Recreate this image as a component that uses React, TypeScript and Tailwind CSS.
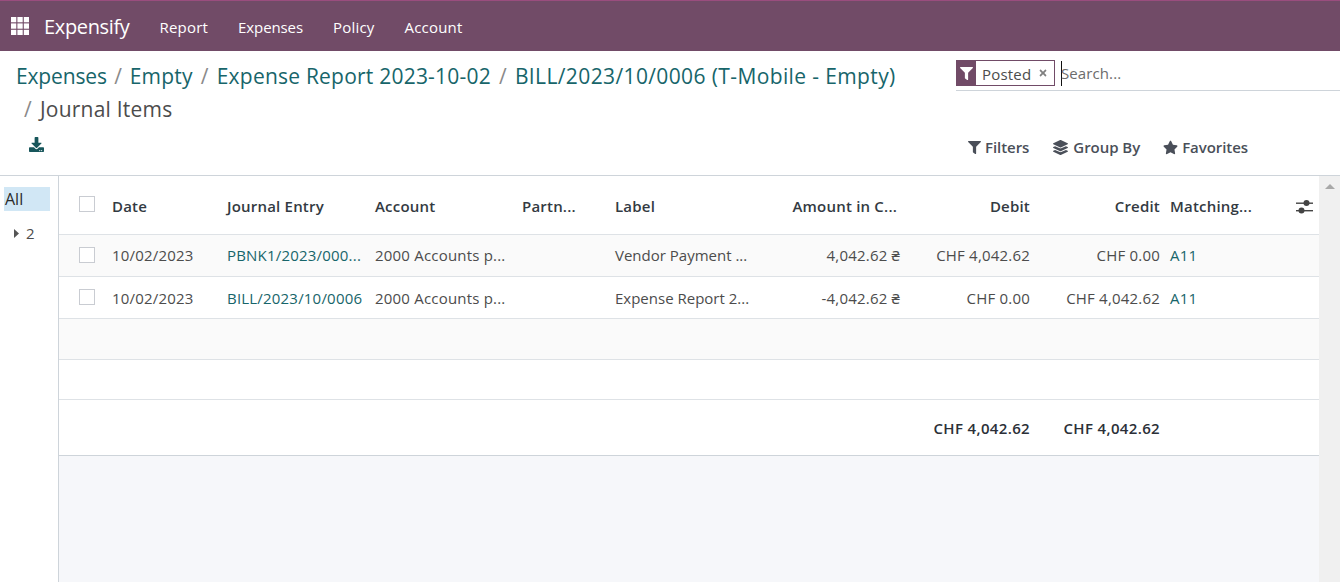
import React from "react";
import { FaFilter, FaLayerGroup, FaStar, FaDownload, FaTimes } from "react-icons/fa";

const grid = "grid grid-cols-[53px_115px_148px_147px_93px_135px_150px_130px_130px_149px] items-center";

function Check() {
  return <span className="block w-4 h-4 ml-5 border border-[#c9ccd2] bg-white" />;
}

function Row({ journal, amount, debit, credit, label, alt }: { journal: string; amount: string; debit: string; credit: string; label: string; alt?: boolean }) {
  return (
    <div className={`${grid} h-[42px] border-b border-[#dee2e6] text-[15px] tracking-[0.2px] text-[#4c4c4c] whitespace-nowrap ${alt ? "bg-[#fafafa]" : "bg-white pt-px"}`}>
      <span className={alt ? "-mt-px" : "-mt-[2px]"}><Check /></span>
      <span>10/02/2023</span>
      <span className="text-[#17656a]">{journal}</span>
      <span>2000 Accounts p...</span>
      <span />
      <span className="tracking-normal">{label}</span>
      <span className="text-right">{amount}</span>
      <span className="text-right">{debit}</span>
      <span className="text-right">{credit}</span>
      <span className="pl-[10px] text-[#17656a]">A11</span>
    </div>
  );
}

export default function App() {
  return (
    <div className="w-[1340px] h-[582px] overflow-hidden flex flex-col bg-white font-['Open_Sans','Noto_Sans',sans-serif] text-[#4c4c4c]">
      <nav className="h-[51px] shrink-0 flex items-center bg-[#714b67] border-t border-[#9a4d7e] text-white">
        <svg className="ml-[11px] w-[18px] h-[18px]" viewBox="0 0 18 18" fill="#fff">
          {[0, 6.4, 12.8].flatMap((y) => [0, 6.4, 12.8].map((x) => <rect key={`${x}-${y}`} x={x} y={y} width="5.3" height="5.3" />))}
        </svg>
        <span className="ml-[15px] pt-px text-[20px] tracking-[-0.35px]">Expensify</span>
        <div className="ml-[30px] pt-[2px] flex gap-[30px] text-[15px] tracking-[0.2px]">
          <span>Report</span>
          <span className="tracking-[-0.1px]">Expenses</span>
          <span>Policy</span>
          <span>Account</span>
        </div>
      </nav>

      <header className="h-[125px] shrink-0 flex border-b border-[#ced4da]">
        <div className="w-[956px] shrink-0 pl-4 flex flex-col">
          <div className="mt-[9px] text-[21px] leading-[33px] tracking-[0.22px] text-[#17656a] whitespace-nowrap">
            <span className="tracking-[-0.15px]">Expenses</span><span className="text-[#8a8a8a] mx-[7.5px]">/</span>
            <span>Empty</span><span className="text-[#8a8a8a] mx-2">/</span>
            <span>Expense Report 2023-10-02</span><span className="text-[#8a8a8a] mx-2">/</span>
            <span className="tracking-[0.38px]">BILL/2023/10/0006 (T-Mobile - Empty)</span>
          </div>
          <div className="text-[21px] leading-[33px] tracking-[0.22px] text-[#4c4c4c] whitespace-nowrap">
            <span className="text-[#8a8a8a] ml-2 mr-2">/</span>Journal Items
          </div>
          <FaDownload className="ml-[13px] mt-[11px] text-[#17565b] w-[15px] h-[15px]" />
        </div>
        <div className="flex-1 flex flex-col">
          <div className="mt-[9px] h-[31px] flex border-b border-[#ced4da]">
            <div className="h-[26px] flex">
              <span className="w-[20px] bg-[#714b67] flex items-center justify-center">
                <FaFilter className="w-[13px] h-[13px] text-white" />
              </span>
              <span className="w-[79px] border border-l-0 border-[#714b67] flex items-center pl-[6px] pt-[2px] text-[15px] tracking-[0.2px]">
                Posted
                <FaTimes className="ml-[7px] -mt-[2px] w-[10px] h-[10px] text-[#808080]" />
              </span>
            </div>
            <span className="ml-[6px] mt-px h-[25px] border-l border-[#111]" />
            <span className="mt-[2px] -ml-px text-[15px] tracking-[0.1px] text-[#6c6c6c]">Search...</span>
          </div>
          <div className="mt-[45px] flex items-center text-[15px] font-semibold tracking-[-0.05px] text-[#4a4f59]">
            <span className="ml-[12px] flex items-center gap-[4px]"><FaFilter className="w-[13px] h-[13px]" />Filters</span>
            <span className="ml-[24px] flex items-center gap-[5px]"><FaLayerGroup className="w-[15px] h-[15px]" />Group By</span>
            <span className="ml-[23px] flex items-center gap-[4px]"><FaStar className="w-[15px] h-[15px]" />Favorites</span>
          </div>
        </div>
      </header>

      <div className="flex-1 flex min-h-0">
        <aside className="w-[59px] shrink-0 border-r border-[#ced4da] pt-[11px] pl-1 bg-white">
          <div className="w-[46px] h-[24px] pl-px bg-[#d1e7f5] text-[16px] font-medium text-[#2b2b2b] leading-[25px]">All</div>
          <div className="mt-[11px] flex items-center text-[15px]">
            <svg className="ml-[10px] w-[5px] h-[9px]" viewBox="0 0 5 9" fill="#555"><path d="M0 0L5 4.5L0 9Z" /></svg>
            <span className="ml-[7px]">2</span>
          </div>
        </aside>

        <main className="w-[1260px] shrink-0 bg-[#f6f7fa] flex flex-col">
          <div className={`${grid} h-[59px] pt-[3px] border-b border-[#dee2e6] bg-white text-[15px] font-semibold tracking-[0.2px] text-[#333a42] whitespace-nowrap`}>
            <span className="-mt-[6px]"><Check /></span>
            <span>Date</span>
            <span>Journal Entry</span>
            <span>Account</span>
            <span>Partn...</span>
            <span>Label</span>
            <span className="text-right pr-[3px]">Amount in C...</span>
            <span className="text-right">Debit</span>
            <span className="text-right">Credit</span>
            <span className="pl-[10px] relative">
              Matching...
              <svg className="absolute left-[136px] top-[3px] w-[17px] h-[17px]" viewBox="0 0 17 17" fill="#444">
                <rect x="0" y="4.5" width="17" height="1.4" />
                <rect x="0" y="12" width="17" height="1.4" />
                <circle cx="10.5" cy="5" r="3" />
                <circle cx="5.5" cy="12.5" r="3" />
              </svg>
            </span>
          </div>
          <Row alt journal="PBNK1/2023/000..." label="Vendor Payment ..." amount="4,042.62 ₴" debit="CHF 4,042.62" credit="CHF 0.00" />
          <Row journal="BILL/2023/10/0006" label="Expense Report 2..." amount="-4,042.62 ₴" debit="CHF 0.00" credit="CHF 4,042.62" />
          <div className="h-[41px] shrink-0 bg-[#fafafa] border-b border-[#dee2e6]" />
          <div className="h-[40px] shrink-0 bg-white border-b border-[#dee2e6]" />
          <div className={`${grid} h-[56px] pt-px shrink-0 bg-white border-b border-[#ced4da] text-[15px] font-semibold tracking-[0.35px] text-[#2b3038] whitespace-nowrap`}>
            <span /><span /><span /><span /><span /><span /><span />
            <span className="text-right">CHF 4,042.62</span>
            <span className="text-right">CHF 4,042.62</span>
          </div>
        </main>

        <div className="flex-1 bg-[#f0f0f0] relative">
          <span className="absolute left-[6px] top-[8px] w-0 h-0 border-x-[5px] border-x-transparent border-b-[5px] border-b-[#a8a8a8]" />
        </div>
      </div>
    </div>
  );
}
